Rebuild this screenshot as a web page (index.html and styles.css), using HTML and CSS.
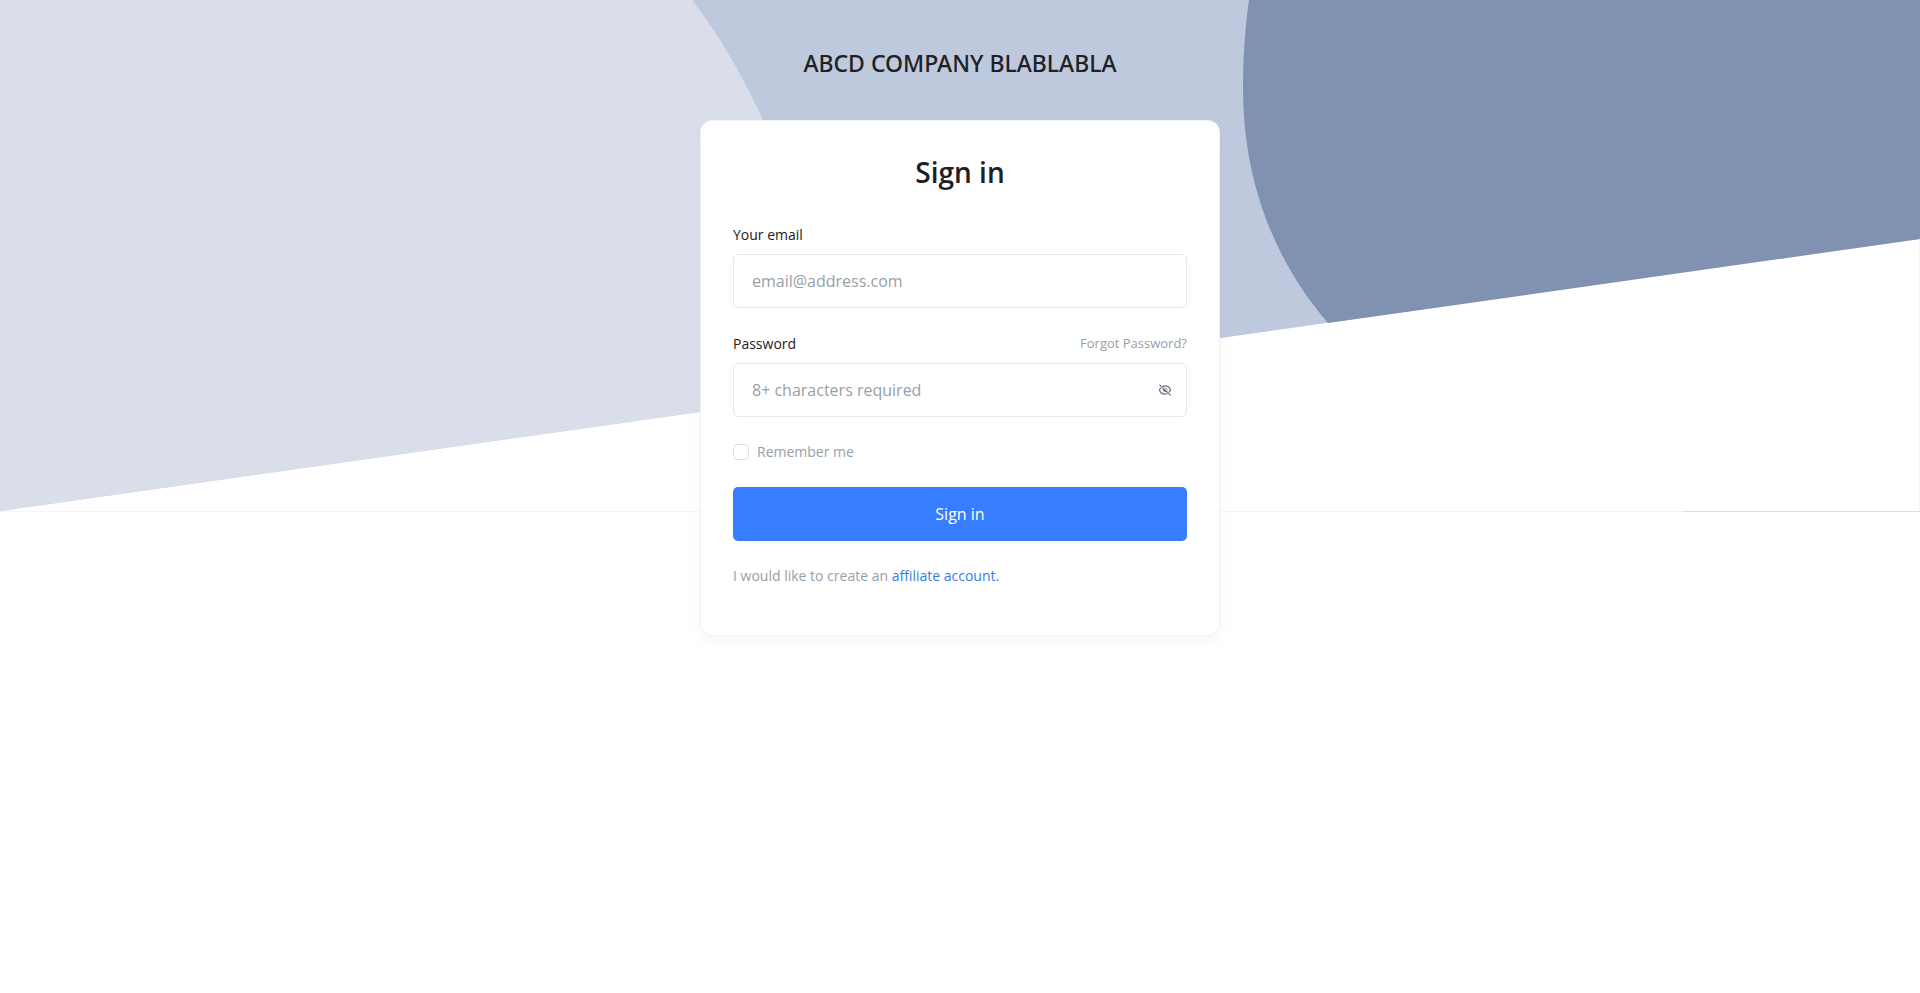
FILE: index.html
```
<!DOCTYPE html>
<html lang="en">
<head>
  <meta charset="UTF-8">
  <meta name="viewport" content="width=device-width, initial-scale=1.0">
  <title>Sign in</title>
  <link rel="stylesheet" href="styles.css">
</head>
<body>
<svg class="bg-shape" viewBox="0 0 1920 512" preserveAspectRatio="none" aria-hidden="true">
  <path fill="#bfc9de" d="M0 0H1920V239L0 511Z"/>
  <path fill="#dadeea" d="M0 0H692C722 38 744 80 763 120C800 200 810 300 806 397L0 511Z"/>
  <path fill="#8091b1" d="M1249 0C1245 28 1243 58 1243 88C1243 178 1272 258 1328 323L1920 239V0Z"/>
  <path fill="#f5f5f6" d="M0 511H1682V512H0ZM1919 240H1920V511H1919Z"/>
  <path fill="#dedede" d="M1682 511H1920V512H1682Z"/>
</svg>
<main class="container">
  <h1 class="company">ABCD COMPANY BLABLABLA</h1>
  <div class="card">
    <form>
      <h2 class="title">Sign in</h2>
      <div class="form-group">
        <label class="label" for="email">Your email</label>
        <input class="input" type="email" id="email" placeholder="email@address.com">
      </div>
      <div class="form-group">
        <div class="label-row">
          <label class="label" for="password">Password</label>
          <a class="forgot" href="#">Forgot Password?</a>
        </div>
        <div class="input-group">
          <input class="input" type="password" id="password" placeholder="8+ characters required">
          <button class="toggle" type="button" aria-label="Show password">
            <svg viewBox="0 0 16 16" width="14" height="14" fill="none" stroke="#66727e" stroke-width="1.4">
              <path d="M5.2 3.9C6 3.5 7 3.3 8 3.3C11 3.3 13.3 5.1 14.4 8C14 9 13.4 9.9 12.7 10.6M10.9 12C10 12.5 9 12.7 8 12.7C5 12.7 2.7 10.9 1.6 8C2 6.9 2.6 6 3.4 5.3"/>
              <path d="M1.6 1.8L14.6 14.2"/>
              <path d="M5.9 6.3C5.2 8 5.9 10.2 8.3 10.3L9.8 9.8L5.9 6.3Z" fill="#66727e" stroke="none"/>
              <path d="M8 5.6C9.5 5.6 10.4 6.8 10.3 8.2" stroke-width="1"/>
            </svg>
          </button>
        </div>
      </div>
      <div class="remember">
        <input class="checkbox" type="checkbox" id="remember">
        <label for="remember">Remember me</label>
      </div>
      <button class="button" type="submit">Sign in</button>
      <p class="note">I would like to create an <a href="#">affiliate account.</a></p>
    </form>
  </div>
</main>
</body>
</html>
```
FILE: styles.css
```
* {
  box-sizing: border-box;
}
body {
  font-family: "Open Sans", sans-serif;
  font-size: 14px;
  line-height: 22px;
  margin: 0;
  color: #1e2022;
  background-color: #fff;
}
.bg-shape {
  position: absolute;
  top: 0;
  left: 0;
  z-index: -1;
  width: 100%;
  height: 512px;
}
.container {
  max-width: 520px;
  margin: 0 auto;
  padding: 48px 0;
}
.company {
  font-family: "Noto Sans", sans-serif;
  font-size: 23px;
  font-weight: 500;
  line-height: 30px;
  text-align: center;
  margin: 0 0 42px;
}
.card {
  background-color: #fff;
  border: 1px solid #eff2f7;
  border-radius: 12px;
  box-shadow: 0 6px 12px rgba(140, 152, 164, 0.08);
  padding: 32px 32px 48px;
}
.title {
  font-size: 28px;
  font-weight: 600;
  line-height: 38px;
  text-align: center;
  margin: 0 0 32px;
}
.form-group {
  margin-bottom: 24px;
}
.label {
  display: block;
  line-height: 23px;
  margin-bottom: 8px;
}
.label-row {
  display: flex;
  justify-content: space-between;
}
.forgot {
  font-size: 13px;
  color: #97a0a6;
  text-decoration: none;
}
.input {
  display: block;
  width: 100%;
  height: 54px;
  padding: 0 18px;
  font-family: inherit;
  font-size: 16px;
  color: #1e2022;
  background-color: #fff;
  border: 1px solid #e7eaed;
  border-radius: 5px;
}
.input::placeholder {
  color: #97a0a6;
  opacity: 1;
}
.input-group {
  position: relative;
}
.toggle {
  position: absolute;
  top: 0;
  right: 0;
  display: flex;
  align-items: center;
  height: 100%;
  padding: 0 15px;
  background: none;
  border: none;
  cursor: pointer;
}
.remember {
  display: flex;
  align-items: center;
  gap: 8px;
  margin-bottom: 24px;
  color: #97a0a6;
}
.checkbox {
  appearance: none;
  width: 16px;
  height: 16px;
  margin: 0;
  background-color: #fff;
  border: 1px solid #dcdfe3;
  border-radius: 4px;
}
.checkbox:checked {
  background-color: #377dff;
}
.button {
  width: 100%;
  height: 54px;
  font-family: inherit;
  font-size: 16px;
  color: #fff;
  background-color: #377dff;
  border: none;
  border-radius: 5px;
  cursor: pointer;
}
.note {
  margin: 24px 0 0;
  color: #97a0a6;
}
.note a {
  color: #377de8;
  text-decoration: none;
}
```
